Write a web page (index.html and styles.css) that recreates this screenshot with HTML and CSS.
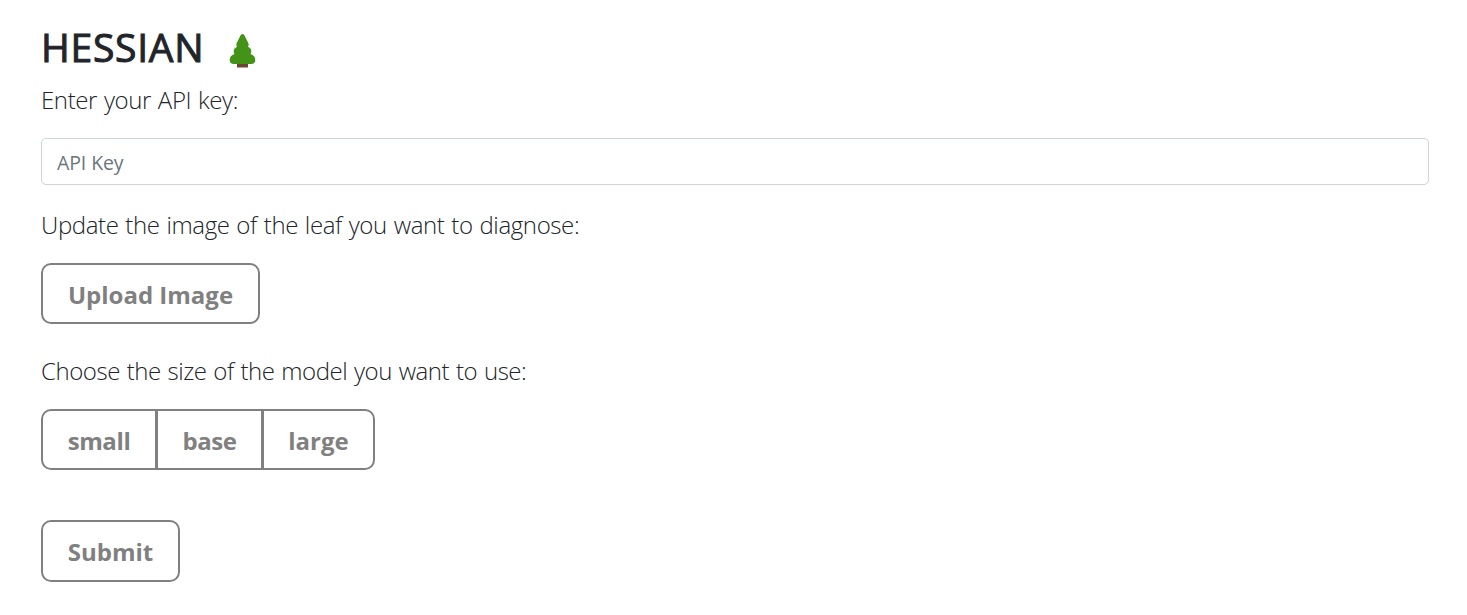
FILE: index.html
```html
<!DOCTYPE html>
<html lang="en">
<head>
<meta charset="utf-8">
<title>HESSIAN</title>
<link rel="stylesheet" href="styles.css">
</head>
<body>
<main class="page">
  <h1 class="title"><span class="name">HESSIAN</span>
    <svg class="tree" viewBox="0 0 27 34" aria-hidden="true">
      <path fill="#6d4534" d="M8 28h11v5.500H8z"/>
      <path fill="#439318" d="M13.500 0C14.700 0 15.400 1 16 2.500L19.300 9Q20.500 11.800 19 12.800Q22.500 14.500 22.300 17.500Q22.200 19 21.500 20Q26.300 21.500 26.300 26Q26.300 30 22 30H5Q.7 30 .7 26Q.7 21.500 5.500 20Q4.800 19 4.700 17.500Q4.500 14.500 8 12.800Q6.500 11.800 7.700 9L11 2.500C11.600 1 12.300 0 13.500 0Z"/>
    </svg>
  </h1>
  <p class="lead key-lead">Enter your API key:</p>
  <input class="field" type="text" placeholder="API Key" aria-label="API Key">
  <p class="lead image-lead">Update the image of the leaf you want to diagnose:</p>
  <button class="btn upload">Upload Image</button>
  <p class="lead size-lead">Choose the size of the model you want to use:</p>
  <div class="group">
    <button class="btn small">small</button>
    <button class="btn base">base</button>
    <button class="btn large">large</button>
  </div>
  <button class="btn submit">Submit</button>
</main>
</body>
</html>
```
FILE: styles.css
```css
* { box-sizing: border-box; }
body { margin: 0; background: #fff; color: #212529; font-family: "Segoe UI", "Open Sans", "Noto Sans", sans-serif; }
.page { display: flex; flex-direction: column; align-items: flex-start; padding: 24px 38px 0 41px; }
.title { display: flex; align-items: center; height: 48px; margin: 0; font-size: 39px; font-weight: 500; line-height: 46px; }
.name { width: 188px; padding-bottom: 3px; letter-spacing: .75px; -webkit-text-stroke: 1px #212529; }
.tree { width: 27px; height: 34px; margin-top: 5px; }
.lead { height: 38px; margin: 0; font-size: 24px; font-weight: 300; line-height: 38px; letter-spacing: -.38px; word-spacing: 1px; white-space: nowrap; }
.key-lead { margin-top: 9px; }
.field { width: 100%; height: 47px; margin-top: 19px; padding: 2px 15px 0; border: 1px solid #ced4da; border-radius: 5px; font: 400 19.500px "Segoe UI", "Open Sans", "Noto Sans", sans-serif; letter-spacing: -.1px; color: #212529; }
.field::placeholder { color: #6c757d; opacity: 1; }
.image-lead { margin-top: 21px; }
.btn { height: 61px; padding: 2px 0 0; border: 2px solid #808080; border-radius: 10px; background: #fff; color: #808080; font: 700 24px "Segoe UI", "Open Sans", "Noto Sans", sans-serif; white-space: nowrap; }
.upload { width: 219px; margin-top: 19px; }
.size-lead { margin-top: 28px; letter-spacing: -.45px; }
.group { display: flex; margin-top: 19px; }
.small { width: 115px; border-right-width: 1px; border-radius: 10px 0 0 10px; letter-spacing: -.4px; }
.base { width: 107px; border-radius: 0; letter-spacing: -.4px; }
.large { width: 112px; border-left-width: 1px; border-radius: 0 10px 10px 0; }
.submit { width: 139px; height: 62px; margin-top: 50px; padding-top: 0; }
```
